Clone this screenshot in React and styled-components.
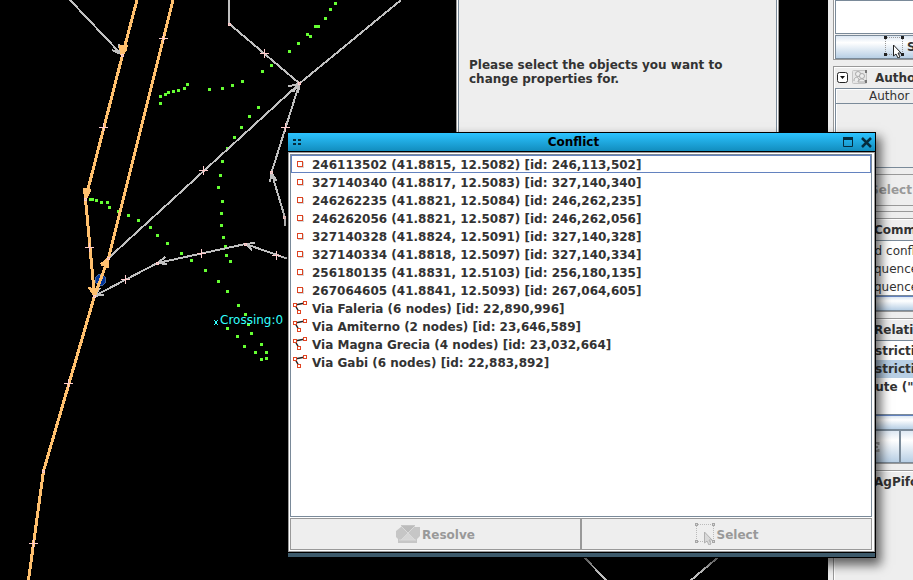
import React from "react";
import styled, { createGlobalStyle, css } from "styled-components";

const primitives = [
  { type: "node", label: "246113502 (41.8815, 12.5082) [id: 246,113,502]" },
  { type: "node", label: "327140340 (41.8817, 12.5083) [id: 327,140,340]" },
  { type: "node", label: "246262235 (41.8821, 12.5084) [id: 246,262,235]" },
  { type: "node", label: "246262056 (41.8821, 12.5087) [id: 246,262,056]" },
  { type: "node", label: "327140328 (41.8824, 12.5091) [id: 327,140,328]" },
  { type: "node", label: "327140334 (41.8818, 12.5097) [id: 327,140,334]" },
  { type: "node", label: "256180135 (41.8831, 12.5103) [id: 256,180,135]" },
  { type: "node", label: "267064605 (41.8841, 12.5093) [id: 267,064,605]" },
  { type: "way", label: "Via Faleria (6 nodes) [id: 22,890,996]" },
  { type: "way", label: "Via Amiterno (2 nodes) [id: 23,646,589]" },
  { type: "way", label: "Via Magna Grecia (4 nodes) [id: 23,032,664]" },
  { type: "way", label: "Via Gabi (6 nodes) [id: 22,883,892]" },
];

// GPS track points
const gpsPoints = [
  [159, 95], [164, 93], [167, 91], [172, 90], [177, 89], [183, 87], [186, 83],
  [208, 88], [221, 87], [231, 84], [241, 80], [261, 70], [270, 64], [288, 50],
  [297, 42], [306, 33], [309, 35], [314, 25], [317, 25], [324, 17], [329, 8],
  [334, 2], [159, 102], [257, 106], [248, 115], [240, 126], [233, 136],
  [226, 147], [221, 160], [219, 174], [217, 186], [221, 200], [220, 212],
  [220, 224], [222, 236], [224, 245], [225, 254], [229, 260], [89, 198],
  [91, 198], [95, 199], [100, 201], [106, 201], [108, 206], [117, 210],
  [127, 214], [137, 219], [149, 226], [156, 234], [166, 242], [180, 252],
  [190, 259], [204, 269], [217, 280], [226, 290], [237, 304], [244, 313],
  [247, 323], [250, 332], [260, 343], [265, 351], [265, 357], [260, 358],
  [254, 351], [243, 345], [236, 335], [226, 327],
];

const wayNodes = [
  [122, 55], [85, 199], [108, 258], [94, 296], [43, 471], [229, 24],
  [299, 83], [271, 172], [284, 217], [245, 244], [157, 263],
];

const virtualNodes = [
  [163, 38], [103, 127], [89, 247], [68, 383], [33, 543], [264, 53],
  [203, 170], [285, 127], [276, 255], [201, 253], [125, 279],
];

const MapView = () => (
  <MapCanvas aria-label="Map">
    <g shapeRendering="crispEdges">
      {gpsPoints.map(([x, y]) => (
        <rect key={`${x}-${y}`} x={x} y={y} width="3" height="3" fill="#66ff33" />
      ))}
      <circle cx="100.5" cy="280" r="5.500" fill="#003399" stroke="#4a6a9a" />
      <g fill="none" stroke="#c0c0c0" strokeWidth="2">
        <path d="M70 0L121 54M112 50L121 54L118.500 44" />
        <path d="M228.500 0L229.500 24L299.500 83.500L401 0" />
        <path d="M108.500 258L299.500 83.500M288 86.500L299.500 83.500L293 92M299.500 83.500L298 93" />
        <path d="M299.500 83.500L271.500 172.500L285 218V226M270 182L271.500 172.500L276.500 181" />
        <path d="M287 258.500L245.500 244L157.500 263L94.500 296" />
        <path d="M255 243L245.500 244L252 250M165.500 257L157.500 263L167 264M100 288L94.500 296L104 294.500" />
        <path d="M581 554L607 581M722 554L690 581" />
      </g>
      <g fill="none" stroke="#ffc06e" strokeWidth="3">
        <path d="M137 0L122.500 55L85.500 199L94.500 296" />
        <path d="M173 0L108.500 258L94.500 296L43.500 471L28.500 580" />
        <path d="M120.500 45L122 54L126.500 46M84 189L86 198L90 190" />
        <path d="M101 265L107.500 259L107.500 268M89 287L94.500 295L98 287" />
      </g>
      <g fill="#ffc06e">
        <path d="M119 45H128L127 50L123 56L120 55Z" />
        <path d="M83 188L91 189L88 198L84 198Z" />
        <path d="M100 265L108 258V268Z" />
        <path d="M90 288H98L95 298Z" />
      </g>
      <g fill="none" stroke="#ffcccc">
        {wayNodes.map(([x, y]) => (
          <rect key={`${x}-${y}`} x={x - 0.5} y={y - 0.5} width="2" height="2" />
        ))}
        {virtualNodes.map(([x, y]) => (
          <path key={`${x}-${y}`} d={`M${x - 4} ${y + 0.5}h9M${x + 0.5} ${y - 4}v9`} />
        ))}
      </g>
      <path d="M214 320l4 5M218 320l-4 5" stroke="#33ffff" />
    </g>
    <text x="220" y="324">Crossing:0</text>
  </MapCanvas>
);

const NodeIcon = () => (
  <Icon viewBox="0 0 16 16" shapeRendering="crispEdges" aria-hidden="true">
    <path d="M6 11.500h5.500v-6" fill="none" stroke="#d8d8d8" />
    <rect x="5.500" y="5.500" width="5" height="5" fill="#fff" stroke="#dd4422" />
  </Icon>
);

const WayIcon = () => (
  <Icon viewBox="0 0 16 16" aria-hidden="true">
    <path d="M3 5L13 3M3 5L7 12" fill="none" stroke="#222" strokeWidth="1.500" />
    <g fill="#fff" stroke="#e04422" shapeRendering="crispEdges">
      <rect x="1.500" y="3.500" width="3" height="3" />
      <rect x="11.500" y="1.500" width="3" height="3" />
      <rect x="5.500" y="10.500" width="3" height="3" />
    </g>
  </Icon>
);

const SelectIcon = ({ faded }) => (
  <ToolIcon viewBox="0 0 20 22" $faded={faded} aria-hidden="true">
    <path d="M3 1.500H17M3 18.500H17M1.500 3V17M18.500 3V17" fill="none" stroke="#999" strokeDasharray="1 1" />
    <g fill={faded ? "#ccc" : "#222"} stroke={faded ? "#777" : "#222"}>
      <rect x="0.500" y="0.500" width="2" height="2" />
      <rect x="17.500" y="0.500" width="2" height="2" />
      <rect x="0.500" y="17.500" width="2" height="2" />
      <rect x="17.500" y="17.500" width="2" height="2" />
    </g>
    <path
      d="M9.500 9V20L12 18L14 22L16 21L14 17H17Z"
      fill={faded ? "#ccc" : "#fff"}
      stroke={faded ? "#888" : "#222"}
    />
  </ToolIcon>
);

const ResolveIcon = () => (
  <svg width="24" height="20" viewBox="0 0 24 20" aria-hidden="true">
    <path d="M5 1H19V3H24V12L21 15V19H2V15L0 13V7L5 3Z" fill="#c6c6c6" />
    <path d="M5 2L12 9L19 2Z" fill="#bcbcbc" />
    <path d="M5 16L12 9L19 16Z" fill="#d6d6d6" />
    <path d="M5 2L12 9L19 2M5 16L12 9L19 16M3 16H20" fill="none" stroke="#dadada" />
  </svg>
);

const AuthorsIcon = () => (
  <svg width="17" height="17" viewBox="0 0 17 17" aria-hidden="true">
    <rect x="0.500" y="1.500" width="14" height="13" rx="1" fill="#e6e6e6" stroke="#c4c4c4" />
    <circle cx="6" cy="5" r="2.500" fill="#eee" stroke="#aaa" />
    <circle cx="10" cy="7" r="2.500" fill="#eee" stroke="#aaa" />
    <path d="M2 12C2 7 7 7 7 12M6 13C6 9 13 9 13 13Z" fill="#eee" stroke="#aaa" />
    <path d="M14 1V4M14 11V14" stroke="#777" strokeWidth="2" />
  </svg>
);

const CollapseIcon = () => (
  <svg width="11" height="11" viewBox="0 0 11 11" aria-hidden="true">
    <rect x="0.500" y="0.500" width="10" height="10" rx="2" fill="#fff" stroke="#222" />
    <path d="M3 4H8L5.500 7Z" fill="#111" />
  </svg>
);

const EditIcon = () => (
  <svg width="10" height="10" viewBox="0 0 10 10" aria-hidden="true">
    <path d="M0 1H9M0 5H8M0 9H9M8.500 0V3M8.500 7V10" stroke="#aaa" strokeWidth="2" />
  </svg>
);

const App = () => {
  return (
    <>
      <GlobalStyle />
      <Desktop>
        <MapView />
        <PropertiesWindow>
          <Message>Please select the objects you want to change properties for.</Message>
        </PropertiesWindow>

        <Dock>
          <DockPanel $first>
            <DockList $height={34} />
            <DockButton $height={24} $spaced>
              <SelectIcon />
              Select
            </DockButton>
          </DockPanel>

          <DockPanel>
            <DockHeader>
              <Toggle aria-label="Collapse">
                <CollapseIcon />
              </Toggle>
              <AuthorsIcon />
              <DockTitle>Authors</DockTitle>
            </DockHeader>
            <AuthorBox>
              <AuthorTable>
                <thead>
                  <tr>
                    <th>Author</th>
                  </tr>
                </thead>
              </AuthorTable>
            </AuthorBox>
            <DisabledDockButton disabled>Select</DisabledDockButton>
          </DockPanel>

          <DockPanel>
            <DockHeader>
              <DockTitle>Command Stack</DockTitle>
            </DockHeader>
            <DockList $height={56}>
              <CommandRow>Add conflict</CommandRow>
              <CommandRow>Sequence</CommandRow>
              <CommandRow>Sequence</CommandRow>
            </DockList>
            <ScrollTrack />
          </DockPanel>

          <DockPanel>
            <DockHeader>
              <DockTitle>Relations</DockTitle>
            </DockHeader>
            <DockList $height={75}>
              <RelationRow>restriction</RelationRow>
              <RelationRow $selected>restriction</RelationRow>
              <RelationRow>route ("S</RelationRow>
            </DockList>
            <ScrollTrack />
            <ButtonPair>
              <DockButton $height={33} $indent={34} aria-label="Edit relation">
                <EditIcon />
              </DockButton>
              <DockButton $height={33} aria-label="Delete relation" />
            </ButtonPair>
          </DockPanel>

          <DockPanel $fill>
            <DockHeader>
              <DockTitle>AgPifoJ</DockTitle>
            </DockHeader>
          </DockPanel>
        </Dock>

        <Dialog role="dialog" aria-labelledby="conflict-title">
          <TitleBar>
            <TitleButton aria-label="Window menu">
              <svg width="9" height="7" viewBox="0 0 9 7">
                <path d="M0 1H3M5 1H8M0 5H3M5 5H8" stroke="#052c3d" strokeWidth="2" />
              </svg>
            </TitleButton>
            <Title id="conflict-title">Conflict</Title>
            <TitleActions>
              <TitleButton aria-label="Maximize">
                <svg width="11" height="11" viewBox="0 0 11 11">
                  <path d="M0.500 1V9.500H9.500V1" fill="none" stroke="#052c3d" />
                  <path d="M0 1.500H10" stroke="#052c3d" strokeWidth="3" />
                </svg>
              </TitleButton>
              <TitleButton aria-label="Close">
                <svg width="11" height="11" viewBox="0 0 11 11">
                  <path d="M1 1L10 10M10 1L1 10" stroke="#052c3d" strokeWidth="2.500" />
                </svg>
              </TitleButton>
            </TitleActions>
          </TitleBar>
          <DialogBody>
            <ConflictList>
              {primitives.map((item, i) => (
                <ConflictRow key={item.label} $focused={i === 0}>
                  {item.type === "node" ? <NodeIcon /> : <WayIcon />}
                  <Label>{item.label}</Label>
                </ConflictRow>
              ))}
            </ConflictList>
            <Buttons>
              <ActionButton disabled>
                <ResolveIcon />
                <Label>Resolve</Label>
              </ActionButton>
              <ActionButton disabled>
                <SelectIcon faded />
                <Label>Select</Label>
              </ActionButton>
            </Buttons>
          </DialogBody>
          <ResizeEdge />
        </Dialog>
      </Desktop>
    </>
  );
};

export default App;

// Styled Components

const GlobalStyle = createGlobalStyle`
  * {
    box-sizing: border-box;
  }

  body {
    margin: 0;
    background-color: #000;
    color: #333;
    font-family: "DejaVu Sans", Verdana, sans-serif;
    font-size: 12px;
    line-height: 14px;
  }

  button {
    margin: 0;
    padding: 0;
    font: inherit;
    color: inherit;
  }

  svg {
    flex: none;
  }
`;

const Desktop = styled.main`
  position: relative;
  display: flex;
  justify-content: flex-end;
  min-height: 100vh;
  overflow: hidden;
`;

const MapCanvas = styled.svg`
  position: absolute;
  top: 0;
  left: 0;
  width: 100%;
  height: 100%;

  text {
    fill: #33ffff;
    font-size: 12px;
  }
`;

const PropertiesWindow = styled.section`
  position: absolute;
  top: 0;
  left: 456px;
  width: 323px;
  height: 400px;
  padding: 58px 12px;
  background-color: #eee;
  border: solid #999;
  border-width: 0 1px;
  box-shadow: inset 1px 0 #fff, inset -1px 0 #fff, inset 2px 0 #7a8a99,
    inset -2px 0 #7a8a99;
`;

const Message = styled.p`
  margin: 0;
  font-weight: bold;
`;

const Dock = styled.aside`
  position: relative;
  display: flex;
  flex-direction: column;
  gap: 6px;
  width: 85px;
  padding-left: 5px;
  background-color: #eee;
  overflow: hidden;
  white-space: nowrap;
`;

const DockPanel = styled.section`
  width: 160px;
  border: 1px solid #999;
  box-shadow: inset 1px 1px #fff;
  padding-left: 1px;

  ${({ $first }) => $first && css`
    border-top: none;
  `}

  ${({ $fill }) => $fill && css`
    flex: 1;
    border-bottom: none;
  `}
`;

const DockHeader = styled.header`
  display: flex;
  align-items: center;
  gap: 4px;
  height: 21px;
  padding-left: 2px;
`;

const DockTitle = styled.h2`
  flex: 1;
  margin: 0;
  padding-right: 10px;
  font-size: 12px;
  font-weight: bold;

  &:first-child {
    padding-left: 37px;
  }

  svg + & {
    padding-left: 2px;
  }
`;

const Toggle = styled.button`
  display: flex;
  border: none;
  background: none;
`;

const DockList = styled.ul`
  height: ${({ $height }) => $height}px;
  margin: 0;
  padding: 1px 0 0;
  list-style: none;
  background-color: #fff;
  border: 1px solid #7a8a99;
`;

const CommandRow = styled.li`
  padding-left: 23px;
  line-height: 18px;
`;

const RelationRow = styled.li`
  padding-left: 25px;
  font-weight: bold;
  line-height: 18px;
  background-color: ${({ $selected }) => ($selected ? "#b8cfe5" : "#fff")};
`;

const metalGradient = css`
  background: linear-gradient(#dde8f3, #fff 30%, #b8cfe5);
`;

const DockButton = styled.button`
  ${metalGradient}
  display: flex;
  align-items: center;
  gap: 3px;
  width: 100%;
  height: ${({ $height }) => $height}px;
  margin-top: ${({ $spaced }) => ($spaced ? 1 : 0)}px;
  padding-left: ${({ $indent = 48 }) => $indent}px;
  border: 1px solid #7a8a99;
  font-weight: bold;
`;

const DisabledDockButton = styled.button`
  width: 100%;
  height: 32px;
  margin: 6px 0 5px;
  padding-left: 34px;
  border: 1px solid #999;
  background: none;
  color: #999;
  font-weight: bold;
  text-align: left;
`;

const AuthorBox = styled.div`
  height: 80px;
  border: 1px solid #7a8a99;
  box-shadow: inset 1px 1px #fff;
`;

const AuthorTable = styled.table`
  width: 100%;
  border-collapse: collapse;

  th {
    height: 14px;
    padding: 0 0 0 33px;
    border-bottom: 1px solid #7a8a99;
    font-weight: normal;
    text-align: left;
  }
`;

const ScrollTrack = styled.div`
  ${metalGradient}
  height: 15px;
  border: 1px solid #7a8a99;
  border-top-color: #6382bf;
`;

const ButtonPair = styled.div`
  display: grid;
  grid-template-columns: 65px 1fr;
`;

const Dialog = styled.section`
  position: absolute;
  top: 132px;
  left: 287px;
  right: 37px;
  border: 1px solid #000;
  background-color: #fff;
  box-shadow: 4px 6px 10px 1px rgba(0, 0, 0, 0.6);
`;

const TitleBar = styled.header`
  display: grid;
  grid-template-columns: 20px 1fr 38px;
  align-items: center;
  height: 19px;
  padding: 0 3px 0 5px;
  border-bottom: 1px solid #000;
  background: linear-gradient(#2cc3ff, #128dbe);
  color: #000;
`;

const Title = styled.h1`
  margin: 0;
  font-size: 12px;
  font-weight: bold;
  text-align: center;
`;

const TitleActions = styled.div`
  display: flex;
  justify-content: flex-end;
  gap: 7px;
`;

const TitleButton = styled.button`
  display: flex;
  border: none;
  background: none;
`;

const DialogBody = styled.div`
  padding: 1px 2px 1px 1px;
  border: 1px solid #999;
`;

const ConflictList = styled.ul`
  height: 363px;
  margin: 0 0 1px;
  padding: 0;
  list-style: none;
  border: 1px solid #7a8a99;
`;

const ConflictRow = styled.li`
  display: flex;
  align-items: center;
  gap: 4px;
  height: 18px;
  border: 1px solid ${({ $focused }) => ($focused ? "#6382bf" : "transparent")};
  font-weight: bold;
`;

const Label = styled.span`
  padding-top: 2px;
`;

const Icon = styled.svg`
  width: 16px;
  height: 16px;
`;

const ToolIcon = styled.svg`
  width: 20px;
  height: 22px;
  opacity: ${({ $faded }) => ($faded ? 0.6 : 1)};
`;

const Buttons = styled.div`
  display: grid;
  grid-template-columns: 1fr 1fr;
`;

const ActionButton = styled.button`
  display: flex;
  align-items: center;
  justify-content: center;
  gap: 2px;
  height: 32px;
  border: 1px solid #999;
  background-color: #eee;
  color: #999;
  font-weight: bold;
`;

const ResizeEdge = styled.div`
  height: 5px;
  border-top: 1px solid #000;
  background-color: #3d5a6b;
`;
